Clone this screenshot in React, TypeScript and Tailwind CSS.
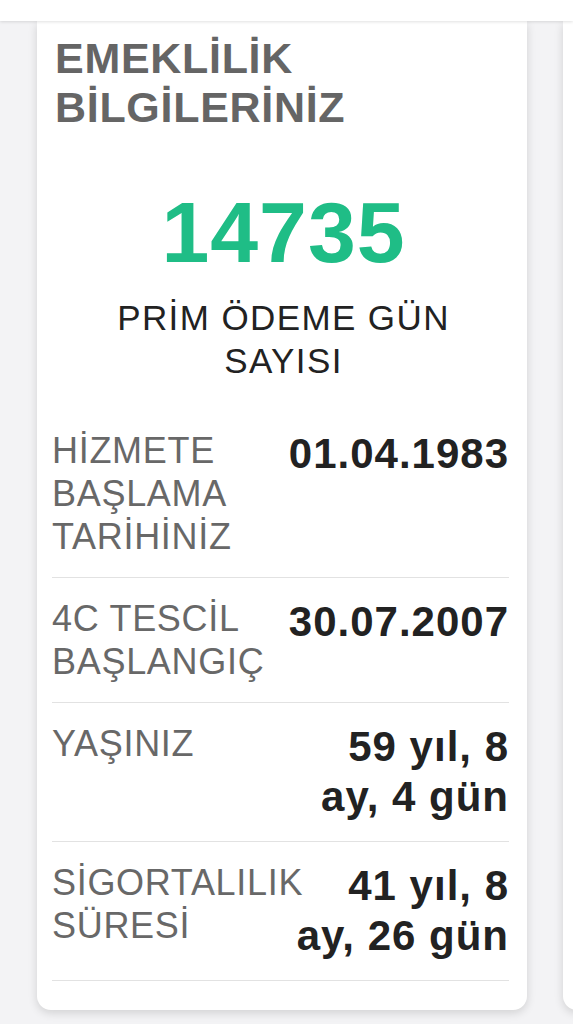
import React from "react";

type Row = { label: string; value: string };

const rows: Row[] = [
  { label: "HİZMETE BAŞLAMA TARİHİNİZ", value: "01.04.1983" },
  { label: "4C TESCİL BAŞLANGIÇ", value: "30.07.2007" },
  { label: "YAŞINIZ", value: "59 yıl, 8 ay, 4 gün" },
  { label: "SİGORTALILIK SÜRESİ", value: "41 yıl, 8 ay, 26 gün" },
];

const InfoRow = ({ row }: { row: Row }) => {
  return (
    <div className="flex py-[19px] border-b border-[#e2e2e2]">
      <div className="flex-1 min-w-0 text-[36px] leading-[43px] tracking-[0.7px] text-[#686868]">
        {row.label}
      </div>
      <div className="w-[221px] shrink-0 text-right text-[42px] leading-[50px] tracking-[1px] font-bold text-[#222222]">
        {row.value}
      </div>
    </div>
  );
};

const RetirementCard = () => {
  return (
    <div className="w-[490px] shrink-0 bg-white rounded-b-[14px] shadow-[0_3px_10px_rgba(0,0,0,0.14)] pl-[15px] pr-[18px] pt-[13px] pb-[27px]">
      <h2 className="ml-[3px] text-[43px] leading-[49px] tracking-[0.7px] font-bold text-[#656565]">
        EMEKLİLİK
        <br />
        BİLGİLERİNİZ
      </h2>
      <div className="mt-[57px] pl-[6px] text-center text-[86px] leading-[86px] tracking-[1px] font-bold text-[#1fbd86]">
        14735
      </div>
      <div className="mx-auto mt-[21px] w-[370px] pl-[6px] text-center text-[35px] leading-[43px] tracking-[1.4px] text-[#222222]">
        PRİM ÖDEME GÜN SAYISI
      </div>
      <div className="mt-[28px]">
        {rows.map((row) => (
          <InfoRow key={row.label} row={row} />
        ))}
      </div>
    </div>
  );
};

export default function App() {
  return (
    <div className="min-h-screen bg-[#f3f3f5] font-['Liberation_Sans',Arial,sans-serif] overflow-hidden">
      <div className="relative z-10 h-[21px] bg-white shadow-[0_1px_3px_rgba(0,0,0,0.12)]" />
      <div className="flex gap-[36px] pl-[37px]">
        <RetirementCard />
        <div className="w-[490px] h-[989px] shrink-0 bg-white rounded-b-[14px] shadow-[0_3px_10px_rgba(0,0,0,0.14)]" />
      </div>
    </div>
  );
}
